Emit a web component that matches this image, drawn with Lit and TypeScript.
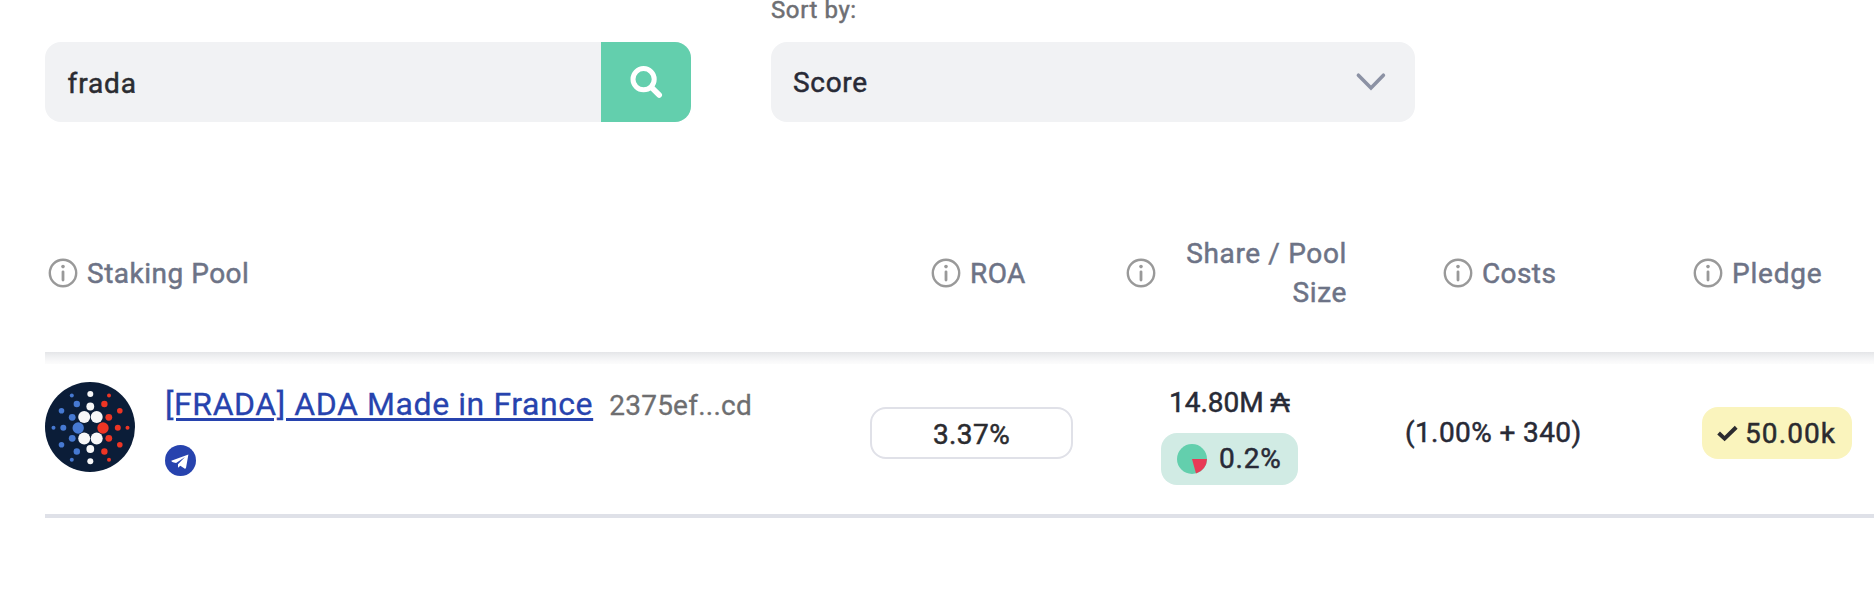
import { LitElement, html, css, svg } from "lit";
import { customElement } from "lit/decorators.js";

type Dot = [number, number, number, string];

const W = "#f7f7f8";
const B = "#4679d2";
const R = "#ee3524";

const dots: Dot[] = [
  [45.3, 12, 3, W], [45.3, 24.5, 3.9, W], [39.2, 35, 6, W], [51.7, 35, 6, W],
  [39.2, 56.5, 6, W], [51.7, 56.5, 6, W], [45.3, 67, 3.9, W], [45.3, 79.3, 3, W],
  [33.2, 46, 5.7, B], [18.3, 45.7, 3, B], [8.5, 45.7, 2, B],
  [27.2, 35.3, 3.4, B], [31.8, 22, 3.2, B], [26.8, 13.5, 2, B], [16.5, 28.7, 2.8, B],
  [27.2, 56.3, 3.4, B], [31.8, 69.5, 3.2, B], [26.8, 77.8, 2, B], [16.5, 62.7, 2.8, B],
  [58, 46, 5.7, R], [72.8, 45.7, 3, R], [82.5, 45.7, 2, R],
  [63.8, 35.3, 3.4, R], [59.4, 22, 3.2, R], [64, 13.5, 2, R], [74.8, 28.7, 2.8, R],
  [63.8, 56.3, 3.4, R], [59.4, 69.5, 3.2, R], [64, 77.8, 2, R], [74.8, 62.7, 2.8, R],
];

const infoIcon = html`<svg class="info" width="30" height="30" viewBox="0 0 30 30">
  <circle cx="15" cy="15" r="13.2" fill="none" stroke="#999" stroke-width="2.4" />
  <circle cx="15" cy="8.6" r="1.8" fill="#999" />
  <path d="M15 13.8V22" stroke="#999" stroke-width="2.8" stroke-linecap="round" />
</svg>`;

@customElement("app-root")
export class AppRoot extends LitElement {
  static styles = css`
    :host { display: block; height: 598px; overflow: hidden; background: #fff;
      font: 400 28px/39px Roboto, "Liberation Sans", sans-serif; color: #282a36;
      -webkit-text-stroke: .5px currentColor; }
    * { box-sizing: border-box; }
    svg { display: block; flex: none; }
    .filters { display: flex; gap: 80px; align-items: flex-end; height: 122px; padding-left: 45px; }
    .search { display: flex; width: 646px; height: 80px; border-radius: 16px; overflow: hidden; background: #f1f2f4; }
    .query { flex: 1; display: flex; align-items: center; padding: 2px 0 0 22.5px; letter-spacing: .9px; color: #2b2c31; }
    .go { width: 90px; border: 0; padding: 0; background: #63cfad; display: flex; align-items: center; justify-content: center; }
    .sort { width: 644px; }
    .label { height: 42px; line-height: 20px; font-size: 24px; letter-spacing: .6px; color: #6e6f73; }
    .select { height: 80px; border-radius: 16px; background: #f1f2f4; display: flex; align-items: center; justify-content: space-between; padding: 0 28px 0 22px; letter-spacing: .7px; }
    .table { margin: 72px 0 0 45px; }
    .line { display: grid; grid-template-columns: 825px 240px 270px 280px 1fr; }
    .head { height: 158px; align-items: center; color: #6d7386; }
    .h { display: flex; align-items: center; gap: 9px; }
    .h1 { padding-left: 3px; letter-spacing: .5px; }
    .h2 { padding-left: 61px; letter-spacing: .4px; }
    .h3 { padding-left: 16px; letter-spacing: .65px; text-align: right; }
    .h3 span { width: 182px; padding-left: 14px; }
    .h4 { padding-left: 63px; letter-spacing: .4px; }
    .h5 { padding-left: 33px; letter-spacing: .8px; }
    .row { height: 166px; border-bottom: 4px solid #dfe1e8; align-items: start;
      background: linear-gradient(#e4e5e8 0, #eeeff1 4px, #f8f8f9 9px, #fcfcfc 12px, #fff 12px) no-repeat; }
    .pool { display: flex; gap: 30px; padding-top: 30px; }
    .name { display: flex; align-items: baseline; gap: 16px; line-height: 45px; margin-bottom: 17px; }
    .name a { font-size: 32px; letter-spacing: .58px; color: #2743ae; text-decoration: underline; text-decoration-thickness: 3px; text-underline-offset: 3px; -webkit-text-stroke-width: .3px; }
    .hash { color: #6e6e70; letter-spacing: .25px; -webkit-text-stroke-width: .3px; }
    .pill { height: 52px; border-radius: 16px; display: flex; align-items: center; }
    .roa { width: 203px; margin-top: 55px; border: 2px solid #e0e1e8; justify-content: center; padding-top: 2px; letter-spacing: .4px; color: #2b2b2f; }
    .share { display: flex; flex-direction: column; align-items: flex-start; padding: 31px 0 0 51px; }
    .amount { padding-left: 8px; margin-bottom: 11px; white-space: nowrap; }
    .pct { width: 137px; background: #d1ebe4; padding: 0 0 1px 16px; gap: 12px; letter-spacing: .8px; }
    .costs { padding: 61px 0 0 25px; letter-spacing: .4px; white-space: nowrap; }
    .pledge { width: 150px; margin: 55px 0 0 42px; background: #faf4bd; padding-left: 15px; gap: 7px; letter-spacing: 1.1px; color: #2b2b2f; }
  `;

  render() {
    return html`
      <div class="filters">
        <div class="search">
          <div class="query">frada</div>
          <button class="go" aria-label="Search">
            <svg width="34" height="34" viewBox="0 0 34 34" fill="none" stroke="#fff">
              <circle cx="14.6" cy="14.2" r="10.6" stroke-width="5" />
              <path d="M22.6 22.4L30.2 30" stroke-width="5.6" stroke-linecap="round" />
            </svg>
          </button>
        </div>
        <div class="sort">
          <div class="label">Sort by:</div>
          <div class="select">Score
            <svg width="32" height="20" viewBox="0 0 32 20" fill="none" stroke="#8c92a4" stroke-width="3.6" stroke-linecap="round">
              <path d="M3.4 3.2L16 15.9L28.4 3.2" />
            </svg>
          </div>
        </div>
      </div>
      <div class="table">
        <div class="line head">
          <div class="h h1">${infoIcon}<span>Staking Pool</span></div>
          <div class="h h2">${infoIcon}<span>ROA</span></div>
          <div class="h h3">${infoIcon}<span>Share / Pool Size</span></div>
          <div class="h h4">${infoIcon}<span>Costs</span></div>
          <div class="h h5">${infoIcon}<span>Pledge</span></div>
        </div>
        <div class="line row">
          <div class="pool">
            <svg width="90" height="90" viewBox="0 0 90 90">
              <circle cx="45" cy="45" r="45" fill="#0b1d38" />
              ${dots.map(([x, y, r, c]) => svg`<circle cx=${x} cy=${y} r=${r} fill=${c} />`)}
            </svg>
            <div>
              <div class="name"><a>[FRADA] ADA Made in France</a><span class="hash">2375ef...cd</span></div>
              <svg width="31" height="31" viewBox="0 0 31 31">
                <circle cx="15.5" cy="15.5" r="15.5" fill="#2743ae" />
                <path d="M23.4 9.6L6.3 15.8Q6 17 11.1 18.1L20 11.9L13 19.3V22.8L15.3 20.8L19.5 23.6Q20.8 23.8 21.1 22.4Z" fill="#fff" />
              </svg>
            </div>
          </div>
          <div class="pill roa">3.37%</div>
          <div class="share">
            <div class="amount">14.80M ₳</div>
            <div class="pill pct">
              <svg width="30" height="30" viewBox="0 0 30 30">
                <circle cx="15" cy="15" r="15" fill="#63cfad" />
                <path d="M15 15H30A15 15 0 0 1 19 29.5Z" fill="#e83a56" />
              </svg>
              <span>0.2%</span>
            </div>
          </div>
          <div class="costs">(1.00% + 340)</div>
          <div class="pill pledge">
            <svg width="21" height="17" viewBox="0 0 21 17" fill="none" stroke="#2b2b2f" stroke-width="4">
              <path d="M1.6 8L7.6 13.6L19.2 2.2" />
            </svg>
            <span>50.00k</span>
          </div>
        </div>
      </div>
    `;
  }
}
